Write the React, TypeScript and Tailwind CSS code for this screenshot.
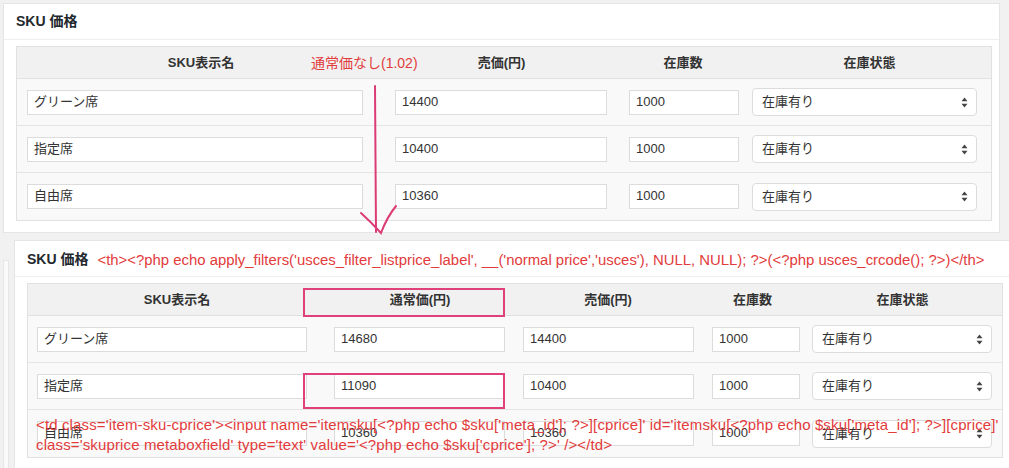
import type { ReactNode } from 'react';

const FONT = "font-['Liberation_Sans','Noto_Sans_CJK_JP',sans-serif]";

type Col = {
  label: string;
  cell: string;
  field: string;
  select?: boolean;
};

const topCols: Col[] = [
  { label: 'SKU表示名', cell: 'w-[368px]', field: 'ml-[10px] w-[336px]' },
  { label: '売価(円)', cell: 'w-[233px]', field: 'ml-[10px] w-[212px]' },
  { label: '在庫数', cell: 'w-[130px]', field: 'ml-[11px] w-[110px]' },
  { label: '在庫状態', cell: 'w-[243px]', field: 'ml-[4px] w-[225px]', select: true },
];

const bottomCols: Col[] = [
  { label: 'SKU表示名', cell: 'w-[298px]', field: 'ml-[9px] w-[270px]' },
  { label: '通常価(円)', cell: 'w-[188px]', field: 'ml-[8px] w-[171px]' },
  { label: '売価(円)', cell: 'w-[188px]', field: 'ml-[9px] w-[171px]' },
  { label: '在庫数', cell: 'w-[101px]', field: 'ml-[10px] w-[88px]' },
  { label: '在庫状態', cell: 'w-[199px]', field: 'ml-[9px] w-[180px]', select: true },
];

const topRows = [
  ['グリーン席', '14400', '1000', '在庫有り'],
  ['指定席', '10400', '1000', '在庫有り'],
  ['自由席', '10360', '1000', '在庫有り'],
];

const bottomRows = [
  ['グリーン席', '14680', '14400', '1000', '在庫有り'],
  ['指定席', '11090', '10400', '1000', '在庫有り'],
  ['自由席', '10360', '10360', '1000', '在庫有り'],
];

function SelectArrows() {
  return (
    <svg width="7" height="11" viewBox="0 0 7 11" className="shrink-0" aria-hidden>
      <path d="M3.5 0.5 L6.5 4.2 H0.5 Z" fill="#444" />
      <path d="M3.5 10.5 L6.5 6.8 H0.5 Z" fill="#444" />
    </svg>
  );
}

function Field({ col, value }: { col: Col; value: string }) {
  if (col.select) {
    return (
      <div
        className={`${col.field} flex h-[28px] items-center justify-between rounded-[4px] border border-[#dcdcdc] bg-white pl-[9px] pr-[8px] text-[13px] text-[#333]`}
      >
        <span>{value}</span>
        <SelectArrows />
      </div>
    );
  }
  return (
    <div
      className={`${col.field} flex h-[25px] items-center border border-[#dcdcdc] bg-white pl-[6px] pb-[1px] text-[13px] text-[#333]`}
    >
      {value}
    </div>
  );
}

function SkuTable({ cols, rows }: { cols: Col[]; rows: string[][] }) {
  return (
    <div className="ml-[12px] mt-[6px] w-[976px] border border-[#e1e1e1]">
      <div className="flex h-[32px] items-center border-b border-[#e1e1e1] bg-[#f1f1f1]">
        {cols.map((c) => (
          <div key={c.label} className={`${c.cell} text-center text-[13px] font-bold text-[#333]`}>
            {c.label}
          </div>
        ))}
      </div>
      {rows.map((r, i) => (
        <div
          key={i}
          className={`flex h-[47px] items-center bg-[#f9f9f9] ${i < rows.length - 1 ? 'border-b border-[#e5e5e5]' : 'h-[46px]'}`}
        >
          {cols.map((c, j) => (
            <div key={c.label} className={`${c.cell} flex items-center`}>
              <Field col={c} value={r[j]} />
            </div>
          ))}
        </div>
      ))}
    </div>
  );
}

function PanelHeader({ children }: { children: ReactNode }) {
  return (
    <div className="flex h-[36px] items-center border-b border-[#eeeeee] px-[12px] text-[14px]">
      {children}
    </div>
  );
}

export default function App() {
  return (
    <div className={`${FONT} relative h-[468px] w-[1009px] overflow-hidden bg-[#f1f1f1]`}>
      <div className="ml-[3px] mt-[3px] h-[230px] w-[997px] border border-[#e5e5e5] bg-white">
        <PanelHeader>
          <span className="font-bold text-[#23282d]">SKU 価格</span>
        </PanelHeader>
        <SkuTable cols={topCols} rows={topRows} />
      </div>

      <div className="mt-[7px] flex">
        <div className="ml-[3px] mt-[20px] h-[210px] w-[6px] shrink-0 border border-[#e6e6e6] bg-[#fafafa]" />
        <div className="ml-[5px] h-[260px] w-[1000px] shrink-0 border border-[#e5e5e5] bg-white">
          <PanelHeader>
            <div className="flex items-center pt-[3px]">
              <span className="font-bold text-[#23282d]">SKU 価格</span>
              <span className="ml-[9px] whitespace-nowrap text-[14.9px] text-[#e23b3b]">
                {"<th><?php echo apply_filters('usces_filter_listprice_label', __('normal price','usces'), NULL, NULL); ?>(<?php usces_crcode(); ?>)</th>"}
              </span>
            </div>
          </PanelHeader>
          <SkuTable cols={bottomCols} rows={bottomRows} />
        </div>
      </div>

      {/* annotations drawn over the screenshot */}
      <div className="absolute left-[311px] top-[53px] text-[14px] leading-[20px] text-[#e23b3b]">
        通常価なし(1.02)
      </div>
      <svg className="absolute left-0 top-0" width="1009" height="468" aria-hidden>
        <g fill="none" stroke="#dc3c75" strokeWidth="2" strokeLinecap="round">
          <path d="M375 86 L376 232" />
          <path d="M361 213 Q371 222 381 233 Q387 217 396 206" />
        </g>
      </svg>
      <div className="absolute left-[303px] top-[288px] h-[29px] w-[202px] border-2 border-[#e0417a]" />
      <div className="absolute left-[303px] top-[373px] h-[36px] w-[202px] border-2 border-[#e0417a]" />
      <div className="absolute left-[36px] top-[415px] whitespace-nowrap text-[15px] leading-[20px] tracking-[0.13px] text-[#e23b3b]">
        <div>{"<td class='item-sku-cprice'><input name='itemsku[<?php echo $sku['meta_id']; ?>][cprice]' id='itemsku[<?php echo $sku['meta_id']; ?>][cprice]'"}</div>
        <div>{"class='skuprice metaboxfield' type='text' value='<?php echo $sku['cprice']; ?>' /></td>"}</div>
      </div>
    </div>
  );
}
